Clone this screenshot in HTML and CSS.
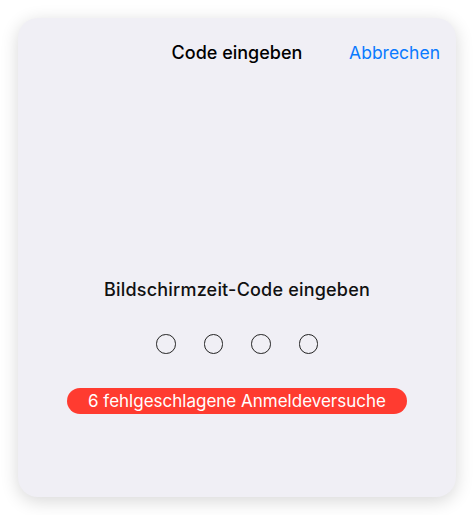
FILE: index.html
```html
<!DOCTYPE html>
<html lang="de">

<head>
    <meta charset="UTF-8">
    <meta name="viewport" content="width=device-width, initial-scale=1.0">
    <title>Code eingeben</title>
    <link rel="stylesheet" href="styles.css">
</head>

<body>
    <div class="sheet">
        <div class="nav-bar">
            <div class="nav-title">Code eingeben</div>
            <a href="#" class="nav-cancel">Abbrechen</a>
        </div>
        <div class="passcode">
            <div class="prompt">Bildschirmzeit-Code eingeben</div>
            <div class="dots">
                <span class="dot"></span>
                <span class="dot"></span>
                <span class="dot"></span>
                <span class="dot"></span>
            </div>
            <div class="failed">6 fehlgeschlagene Anmeldeversuche</div>
        </div>
    </div>
</body>

</html>
```

FILE: styles.css
```css
html,
body {
    margin: 0;
    padding: 0;
    width: 100%;
    height: 100%;
}

body {
    font-family: Inter, "Noto Sans", sans-serif;
    background-color: #ffffff;
    padding: 18px;
    box-sizing: border-box;
}

.sheet {
    width: 438px;
    height: 479px;
    background-color: #f0eff5;
    border-radius: 20px;
    box-shadow: 0 4px 18px rgba(0, 0, 0, 0.16);
    display: flex;
    flex-direction: column;
}

.nav-bar {
    position: relative;
    height: 69px;
    display: flex;
    align-items: center;
    justify-content: center;
}

.nav-title {
    font-size: 18px;
    font-weight: 500;
    color: #000;
}

.nav-cancel {
    position: absolute;
    right: 16px;
    top: 0;
    line-height: 69px;
    font-size: 17.5px;
    color: #0a7aff;
    text-decoration: none;
}

.passcode {
    display: flex;
    flex-direction: column;
    align-items: center;
}

.prompt {
    margin-top: 192px;
    line-height: 22px;
    font-size: 18px;
    font-weight: 500;
    color: #111;
    letter-spacing: 0.2px;
}

.dots {
    margin-top: 33px;
    display: flex;
    gap: 28px;
}

.dot {
    width: 17.5px;
    height: 17.5px;
    border: 1.4px solid #222;
    border-radius: 50%;
}

.failed {
    margin-top: 34px;
    width: 340px;
    height: 26px;
    line-height: 26px;
    border-radius: 13px;
    background-color: #ff3b30;
    color: #fff;
    font-size: 17px;
    text-align: center;
}
```
